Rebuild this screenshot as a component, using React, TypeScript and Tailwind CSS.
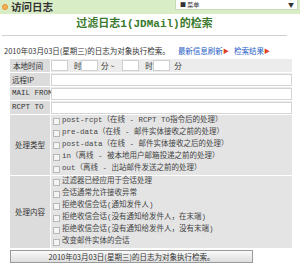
import React from "react";

const cjk = "font-['Noto_Sans_CJK_JP','Noto_Sans_CJK_SC',sans-serif]";
const mono = "font-['Liberation_Mono','Noto_Sans_CJK_JP',monospace]";

const typeItems = [
  "post-rcpt（在线 - RCPT TO指令后的处理）",
  "pre-data（在线 - 邮件实体接收之前的处理）",
  "post-data（在线 - 邮件实体接收之后的处理）",
  "in（离线 - 被本地用户邮箱投递之前的处理）",
  "out（离线 - 出站邮件发送之前的处理）",
];

const contentItems = [
  "过滤器已经应用于会话处理",
  "会话通常允许接收异常",
  "拒绝收信会话(通知发件人)",
  "拒绝收信会话(没有通知给发件人，在末端)",
  "拒绝收信会话(没有通知给发件人，没有末端)",
  "改变邮件实体的会话",
];

const Check = ({ label }: { label: string }) => (
  <div className="h-[12px] flex items-center gap-[2px]">
    <span className="w-[7px] h-[7px] border border-[#b8b8b8] bg-[#f4f4f4] shrink-0" />
    <span className={`${mono} text-[7.5px] leading-none text-[#444] whitespace-nowrap`}>{label}</span>
  </div>
);

const App: React.FC = () => {
  return (
    <div className={`w-[300px] h-[268px] overflow-hidden bg-white text-[7.5px] text-[#333] ${cjk}`}>
      {/* header */}
      <header className="h-[14px] bg-[#d8ecc6] flex justify-between pl-[2px] pr-[2px]">
        <div className="flex items-center gap-[3px]">
          <span className="w-[6px] h-[6px] rounded-full bg-[#f6b25a] border border-[#e98f2a]" />
          <span className="text-[10.5px] leading-[14px] font-bold text-[#333]">访问日志</span>
        </div>
        <div className="w-[123px] h-[10px] bg-white border border-[#c8d8b8] border-t-0 flex items-center justify-between pl-[4px] pr-[3px]">
          <span className="text-[6px] leading-none text-[#333]">■ 菜单</span>
          <span className="text-[6px] leading-none">▼</span>
        </div>
      </header>

      {/* title */}
      <div className="ml-[2px] w-[285px] h-[22px] border-b border-[#d0d0d0] flex items-center justify-center">
        <h1 className={`${mono} text-[11px] font-bold leading-none text-[#3a7a2c]`}>过滤日志1(JDMail)的检索</h1>
      </div>

      <p className="mt-[10px] ml-[4px] h-[10px] flex items-center whitespace-nowrap leading-none">
        <span>2010年03月03日(星期三)的日志为对象执行检索。</span>
        <a className="ml-[8px] text-[#2b5fc7]">最新信息刷新</a>
        <span className="text-[#e0401a] text-[6px]">▶</span>
        <a className="ml-[5px] text-[#2b5fc7]">检索结果</a>
        <span className="text-[#e0401a] text-[6px]">▶</span>
      </p>

      {/* form table */}
      <div className="mt-[3px] ml-[10px] w-[282px] flex flex-col gap-px bg-white">
        <div className="flex gap-px h-[13px]">
          <div className="w-[40px] bg-[#dcdcdc] pl-[3px] flex items-center">本地时间</div>
          <div className="flex-1 bg-[#ececec] flex items-center">
            <span className="w-[17px] h-[11px] bg-white border border-[#cfcfcf]" />
            <span className="ml-[6px] w-[7px]">时</span>
            <span className="w-[17px] h-[11px] bg-white border border-[#cfcfcf]" />
            <span className="ml-[3px]">分 ~</span>
            <span className="ml-[8px] w-[17px] h-[11px] bg-white border border-[#cfcfcf]" />
            <span className="ml-[6px] w-[8px]">时</span>
            <span className="w-[17px] h-[11px] bg-white border border-[#cfcfcf]" />
            <span className="ml-[4px]">分</span>
          </div>
        </div>
        {["远程IP", "MAIL FROM", "RCPT TO"].map((l) => (
          <div key={l} className="flex gap-px h-[13px]">
            <div className={`w-[40px] bg-[#dcdcdc] pl-[2px] flex items-center whitespace-nowrap ${l === "远程IP" ? "" : mono} text-[7.5px]`}>
              {l}
            </div>
            <div className="flex-1 bg-[#ececec] flex items-center">
              <span className="w-full h-[12px] bg-white border border-[#d4d4d4]" />
            </div>
          </div>
        ))}
        <div className="flex gap-px">
          <div className="w-[40px] bg-[#dcdcdc] flex items-center justify-center">处理类型</div>
          <div className="flex-1 bg-[#e4e4e4] pl-[2px]">
            {typeItems.map((t) => (
              <Check key={t} label={t} />
            ))}
          </div>
        </div>
        <div className="flex gap-px">
          <div className="w-[40px] bg-[#dcdcdc] flex items-center justify-center">处理内容</div>
          <div className="flex-1 bg-[#e4e4e4] pl-[2px]">
            {contentItems.map((t) => (
              <Check key={t} label={t} />
            ))}
          </div>
        </div>
      </div>

      <button className="mt-[2px] ml-[10px] w-[243px] h-[13px] border border-[#9a9a9a] bg-gradient-to-b from-[#fafafa] to-[#dedede] text-[7.5px] leading-none text-[#333] flex items-center justify-center">
        2010年03月03日(星期三)的日志为对象执行检索。
      </button>
    </div>
  );
};

export default App;
